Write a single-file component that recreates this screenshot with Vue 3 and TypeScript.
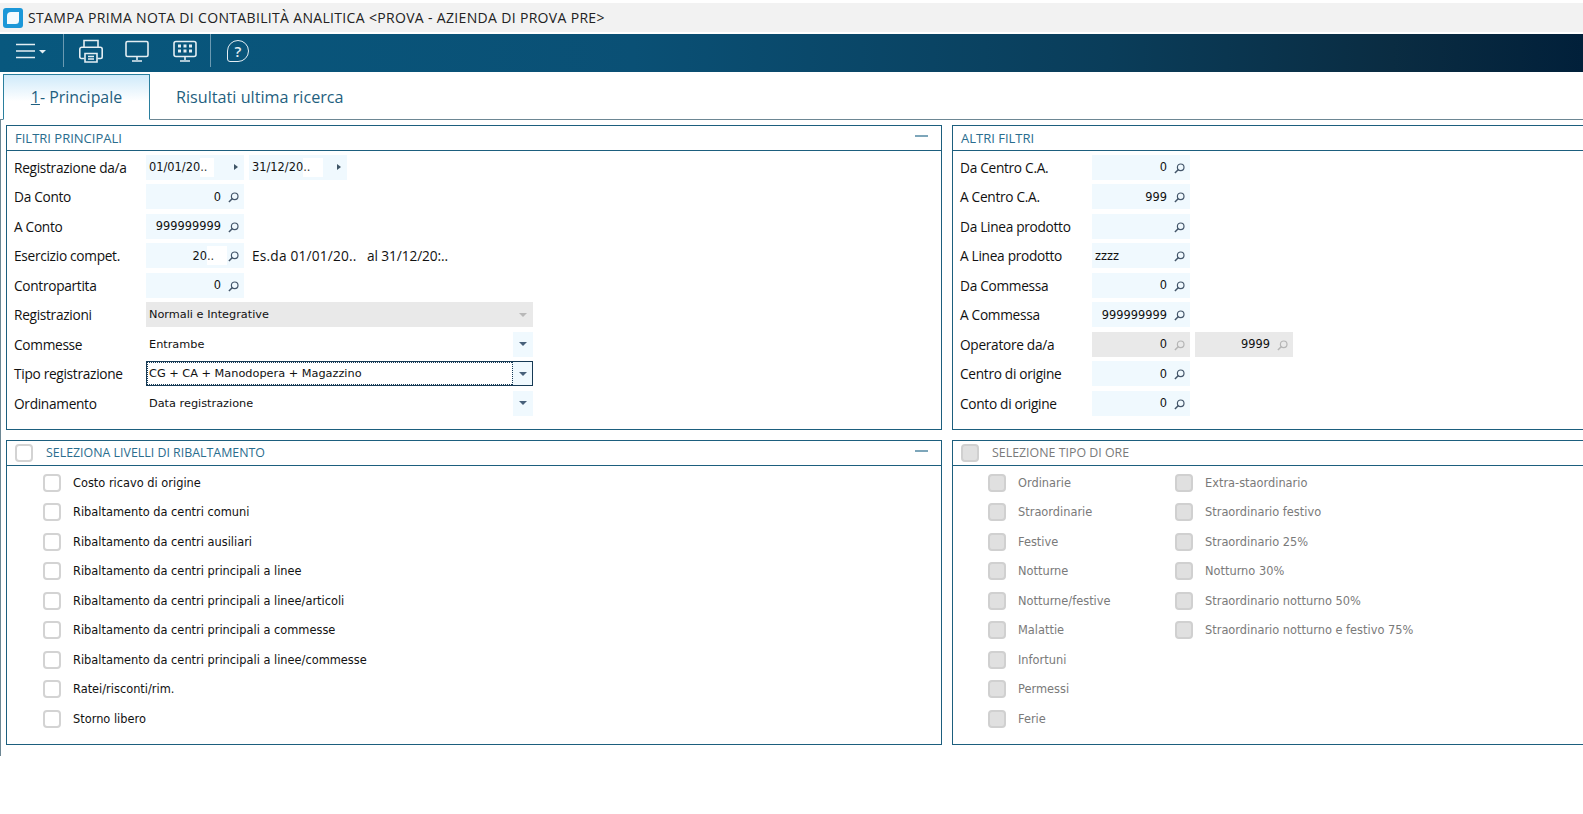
<script setup lang="ts">
const mainRows = [
  { label: 'Da Conto', value: '0' },
  { label: 'A Conto', value: '999999999' },
];
const combos = [
  { label: 'Registrazioni', value: 'Normali e Integrative', cls: 'disabled' },
  { label: 'Commesse', value: 'Entrambe', cls: '' },
  { label: 'Tipo registrazione', value: 'CG + CA + Manodopera + Magazzino', cls: 'focus' },
  { label: 'Ordinamento', value: 'Data registrazione', cls: '' },
];
const otherTop = [
  { label: 'Da Centro C.A.', value: '0' },
  { label: 'A Centro C.A.', value: '999' },
  { label: 'Da Linea prodotto', value: '' },
  { label: 'A Linea prodotto', value: 'zzzz', left: true },
  { label: 'Da Commessa', value: '0' },
  { label: 'A Commessa', value: '999999999' },
];
const levels = [
  'Costo ricavo di origine',
  'Ribaltamento da centri comuni',
  'Ribaltamento da centri ausiliari',
  'Ribaltamento da centri principali a linee',
  'Ribaltamento da centri principali a linee/articoli',
  'Ribaltamento da centri principali a commesse',
  'Ribaltamento da centri principali a linee/commesse',
  'Ratei/risconti/rim.',
  'Storno libero',
];
const oreA = ['Ordinarie', 'Straordinarie', 'Festive', 'Notturne', 'Notturne/festive', 'Malattie', 'Infortuni', 'Permessi', 'Ferie'];
const oreB = ['Extra-staordinario', 'Straordinario festivo', 'Straordinario 25%', 'Notturno 30%', 'Straordinario notturno 50%', 'Straordinario notturno e festivo 75%'];
</script>

<template>
  <div class="page">
    <div class="title">
      <svg class="logo" width="20" height="20" viewBox="0 0 20 20"><rect width="20" height="20" rx="3" fill="#1b97d8"/><path d="M8 4h8v8.500a3.500 3.500 0 0 1-3.500 3.500H4V8a4 4 0 0 1 4-4z" fill="#f2fafe"/></svg>
      <span>STAMPA PRIMA NOTA DI CONTABILITÀ ANALITICA &lt;PROVA - AZIENDA DI PROVA PRE&gt;</span>
    </div>
    <div class="toolbar">
      <svg class="ic" width="34" height="38" viewBox="0 0 34 38" fill="none" stroke="#e4eef3" stroke-width="1.600"><path d="M2 10.500h19M2 17h19M2 23.500h19"/><path d="M25 16h7l-3.500 3.500z" fill="#e4eef3" stroke="none"/></svg>
      <i class="sep first"></i>
      <svg class="ic printer" width="24" height="38" viewBox="0 0 24 38" fill="none" stroke="#e4eef3" stroke-width="1.600"><path d="M5 13v-6.500h14V13"/><path d="M5.500 24.500H2.500a1.700 1.700 0 0 1-1.700-1.700v-7.600a2 2 0 0 1 2-2h18.400a2 2 0 0 1 2 2v7.600a1.700 1.700 0 0 1-1.700 1.700H18.500"/><path d="M6 19.500h12v8.500H6z"/><path d="M9 22.500h6M9 25h6"/></svg>
      <svg class="ic monitor" width="24" height="38" viewBox="0 0 24 38" fill="none" stroke="#e4eef3" stroke-width="1.600"><rect x="1" y="7.500" width="22" height="15" rx="1.500"/><path d="M12 22.500v3.500M7 27h10"/></svg>
      <svg class="ic keys" width="24" height="38" viewBox="0 0 24 38" fill="none" stroke="#e4eef3" stroke-width="1.600"><rect x="1" y="7.500" width="22" height="15" rx="2"/><path d="M12 22.500v3.500M7 27h10"/><g fill="#e4eef3" stroke="none"><rect x="5" y="10.500" width="3" height="3"/><rect x="10.500" y="10.500" width="3" height="3"/><rect x="16" y="10.500" width="3" height="3"/><rect x="5" y="15.500" width="3" height="3"/><rect x="10.500" y="15.500" width="3" height="3"/><rect x="16" y="15.500" width="3" height="3"/></g></svg>
      <i class="sep second"></i>
      <span class="help"><span>?</span></span>
    </div>
    <div class="tabs">
      <div class="tab active"><u>1</u>- Principale</div>
      <div class="tab">Risultati ultima ricerca</div>
    </div>
    <div class="body">
      <section class="panel upper">
        <header><span class="ptitle">FILTRI PRINCIPALI</span><i class="dash"></i></header>
        <div class="rows">
          <div class="row">
            <label>Registrazione da/a</label>
            <div class="field date"><span class="val">01/01/20</span><span class="cut">..</span><i class="play"></i></div>
            <div class="field date second"><span class="val">31/12/20</span><span class="cut wide">..</span><i class="play"></i></div>
          </div>
          <div v-for="r in mainRows" :key="r.label" class="row">
            <label>{{ r.label }}</label>
            <div class="field num"><span class="val">{{ r.value }}</span><svg class="lens" viewBox="0 0 12 12" width="11" height="11"><circle cx="7.300" cy="4.700" r="3.600" fill="none" stroke="#44566a" stroke-width="1.300"/><path d="M4.800 7.200 1 11" stroke="#44566a" stroke-width="1.600"/></svg></div>
          </div>
          <div class="row">
            <label>Esercizio compet.</label>
            <div class="field num year"><span class="val">20</span><span class="cut wide">..</span><svg class="lens" viewBox="0 0 12 12" width="11" height="11"><circle cx="7.300" cy="4.700" r="3.600" fill="none" stroke="#44566a" stroke-width="1.300"/><path d="M4.800 7.200 1 11" stroke="#44566a" stroke-width="1.600"/></svg></div>
            <span class="note">Es.da 01/01/20..</span><span class="note al">al 31/12/20:..</span>
          </div>
          <div class="row">
            <label>Contropartita</label>
            <div class="field num"><span class="val">0</span><svg class="lens" viewBox="0 0 12 12" width="11" height="11"><circle cx="7.300" cy="4.700" r="3.600" fill="none" stroke="#44566a" stroke-width="1.300"/><path d="M4.800 7.200 1 11" stroke="#44566a" stroke-width="1.600"/></svg></div>
          </div>
          <div v-for="c in combos" :key="c.label" class="row">
            <label>{{ c.label }}</label>
            <div class="combo" :class="c.cls"><span class="val">{{ c.value }}</span><span class="drop"><i></i></span></div>
          </div>
        </div>
      </section>
      <section class="panel upper">
        <header><span class="ptitle">ALTRI FILTRI</span></header>
        <div class="rows">
          <div v-for="r in otherTop" :key="r.label" class="row">
            <label>{{ r.label }}</label>
            <div class="field num" :class="{ left: r.left }"><span class="val">{{ r.value }}</span><svg class="lens" viewBox="0 0 12 12" width="11" height="11"><circle cx="7.300" cy="4.700" r="3.600" fill="none" stroke="#44566a" stroke-width="1.300"/><path d="M4.800 7.200 1 11" stroke="#44566a" stroke-width="1.600"/></svg></div>
          </div>
          <div class="row">
            <label>Operatore da/a</label>
            <div class="field num off"><span class="val">0</span><svg class="lens" viewBox="0 0 12 12" width="11" height="11"><circle cx="7.300" cy="4.700" r="3.600" fill="none" stroke="#b5b5b5" stroke-width="1.300"/><path d="M4.800 7.200 1 11" stroke="#b5b5b5" stroke-width="1.600"/></svg></div>
            <div class="field num off second"><span class="val">9999</span><svg class="lens" viewBox="0 0 12 12" width="11" height="11"><circle cx="7.300" cy="4.700" r="3.600" fill="none" stroke="#b5b5b5" stroke-width="1.300"/><path d="M4.800 7.200 1 11" stroke="#b5b5b5" stroke-width="1.600"/></svg></div>
          </div>
          <div class="row">
            <label>Centro di origine</label>
            <div class="field num"><span class="val">0</span><svg class="lens" viewBox="0 0 12 12" width="11" height="11"><circle cx="7.300" cy="4.700" r="3.600" fill="none" stroke="#44566a" stroke-width="1.300"/><path d="M4.800 7.200 1 11" stroke="#44566a" stroke-width="1.600"/></svg></div>
          </div>
          <div class="row">
            <label>Conto di origine</label>
            <div class="field num"><span class="val">0</span><svg class="lens" viewBox="0 0 12 12" width="11" height="11"><circle cx="7.300" cy="4.700" r="3.600" fill="none" stroke="#44566a" stroke-width="1.300"/><path d="M4.800 7.200 1 11" stroke="#44566a" stroke-width="1.600"/></svg></div>
          </div>
        </div>
      </section>
      <section class="panel lower">
        <header class="chk"><i class="box"></i><span class="ptitle">SELEZIONA LIVELLI DI RIBALTAMENTO</span><i class="dash"></i></header>
        <div class="checks">
          <div v-for="l in levels" :key="l" class="check"><i class="box"></i><span>{{ l }}</span></div>
        </div>
      </section>
      <section class="panel lower muted">
        <header class="chk"><i class="box"></i><span class="ptitle">SELEZIONE TIPO DI ORE</span></header>
        <div class="ore">
          <div class="checks"><div v-for="l in oreA" :key="l" class="check"><i class="box"></i><span>{{ l }}</span></div></div>
          <div class="checks"><div v-for="l in oreB" :key="l" class="check"><i class="box"></i><span>{{ l }}</span></div></div>
        </div>
      </section>
    </div>
  </div>
</template>

<style>
html, body { margin: 0; background: #fff; overflow: hidden; }
</style>

<style scoped>
.page { width: 1583px; height: 814px; overflow: hidden; padding-top: 3px; box-sizing: border-box; font-family: "Open Sans", "Noto Sans", sans-serif; color: #111; }
.title { height: 29px; background: #f2f2f2; display: flex; align-items: center; padding-left: 3px; font-size: 14px; letter-spacing: 0.33px; color: #222; }
.title span { margin-left: 5px; }
.logo { flex: none; }
.toolbar { margin-top: 2px; height: 38px; background: linear-gradient(90deg, #08587e 0%, #0a5075 40%, #0a3d5a 70%, #0a2c42 88%, #01203a 100%); display: flex; align-items: center; padding-left: 14px; }
.ic { flex: none; display: block; }
.sep { flex: none; width: 1px; height: 33px; background: #6b9ab2; align-self: flex-start; }
.sep.first { margin-left: 15px; }
.printer { margin-left: 15px; }
.monitor { margin-left: 22px; }
.keys { margin-left: 24px; }
.sep.second { margin-left: 13px; }
.help { margin-left: 16px; margin-top: -5px; width: 20px; height: 20px; border: 1.600px solid #e4eef3; border-radius: 50% 50% 50% 3px; display: flex; align-items: center; justify-content: center; color: #e4eef3; font-size: 15px; font-weight: 600; box-sizing: content-box; }
.tabs { margin-top: 2px; height: 45px; border-bottom: 1px solid #6d8794; display: flex; padding-left: 3px; box-sizing: content-box; }
.tab { height: 45px; font-size: 16.200px; color: #1f5f80; display: flex; align-items: center; padding: 0 26px; box-sizing: border-box; }
.tab.active { width: 147px; font-size: 15.900px; background: linear-gradient(180deg, #cfeafa 0%, #fff 60%); border: 1px solid #2a7f9e; border-bottom: 1px solid #fff; height: 46px; justify-content: center; padding: 0; white-space: pre; }
.body { border-left: 1px solid #6d8794; height: 636px; padding: 5px 0 0 5px; display: grid; grid-template-columns: 936px 640px; grid-template-rows: 305px 305px; column-gap: 10px; row-gap: 10px; box-sizing: border-box; }
.panel { border: 1px solid #1d5f7e; box-sizing: border-box; }
.panel header { height: 24px; border-bottom: 1px solid #1d5f7e; display: flex; align-items: center; padding-left: 8px; position: relative; box-sizing: content-box; }
.ptitle { color: #2a6d8e; }
.upper .ptitle { font-size: 13px; }
.lower .ptitle { font-size: 12.400px; padding-bottom: 1px; }
.dash { position: absolute; right: 13px; top: 9px; width: 13px; height: 2px; background: #7da6ba; }
.rows { padding: 3.750px 0 0 7px; display: flex; flex-direction: column; row-gap: 4.500px; }
.row { height: 25px; display: flex; align-items: center; font-size: 13.700px; }
.row label { width: 132px; flex: none; letter-spacing: -0.3px; }
.field { width: 98px; height: 25px; background: #f0f9fe; display: flex; align-items: center; position: relative; flex: none; font-family: "DejaVu Sans", sans-serif; font-size: 11.400px; box-sizing: border-box; }
.field.second { margin-left: 5px; }
.field.off { background: #e9e9e9; }
.field.num { justify-content: flex-end; padding-right: 23px; }
.field.num.left { justify-content: flex-start; padding-left: 3px; }
.field.num.year { padding-right: 17px; }
.lens { position: absolute; right: 5px; top: 8px; }
.field.date { padding-left: 3px; }
.cut { background: #fff; height: 19px; display: flex; align-items: center; width: 14px; color: #333; }
.cut.wide { width: 20px; }
.play { position: absolute; right: 6px; top: 9px; width: 0; height: 0; border-left: 4.500px solid #3f5566; border-top: 3.500px solid transparent; border-bottom: 3.500px solid transparent; }
.note { margin-left: 8px; font-size: 13.700px; flex: none; width: 115px; white-space: nowrap; letter-spacing: 0.2px; }
.note.al { margin-left: 0; letter-spacing: -0.1px; }
.combo { width: 387px; height: 25px; position: relative; display: flex; align-items: center; padding-left: 3px; box-sizing: border-box; font-family: "DejaVu Sans", sans-serif; font-size: 11.300px; flex: none; }
.combo.disabled { background: #e9e9e9; }
.drop { position: absolute; right: 0; top: 0; width: 20px; height: 25px; background: #f0f9fe; display: flex; align-items: center; justify-content: center; }
.drop i { width: 0; height: 0; border-top: 4px solid #47607a; border-left: 4px solid transparent; border-right: 4px solid transparent; }
.combo.disabled .drop { background: transparent; }
.combo.disabled .drop i { border-top-color: #b8b8b8; }
.combo.focus { border: 1px solid #163a55; outline: 1px dotted #163a55; outline-offset: -2px; padding-left: 2px; background: #fff; }
.combo.focus .drop { height: 23px; border-left: 1px dotted #163a55; box-sizing: border-box; }
.box { flex: none; width: 18px; height: 18px; border: 2px solid #d3d3d3; border-radius: 4px; box-sizing: border-box; background: #fff; display: block; }
.panel header.chk .ptitle { margin-left: 13px; }
.checks { padding: 4.250px 0 0 36px; display: flex; flex-direction: column; row-gap: 4.500px; }
.check { height: 25px; display: flex; align-items: center; font-family: "DejaVu Sans", sans-serif; font-size: 11.400px; }
.check span { margin-left: 12px; white-space: nowrap; }
.ore { display: flex; }
.ore .checks { width: 186px; padding-left: 35px; box-sizing: border-box; }
.ore .checks + .checks { width: auto; padding-left: 36px; }
.muted .ptitle, .muted .check { color: #7a7a7a; }
.muted .box { background: #e0e0e0; border-color: #d0d0d0; }
</style>
